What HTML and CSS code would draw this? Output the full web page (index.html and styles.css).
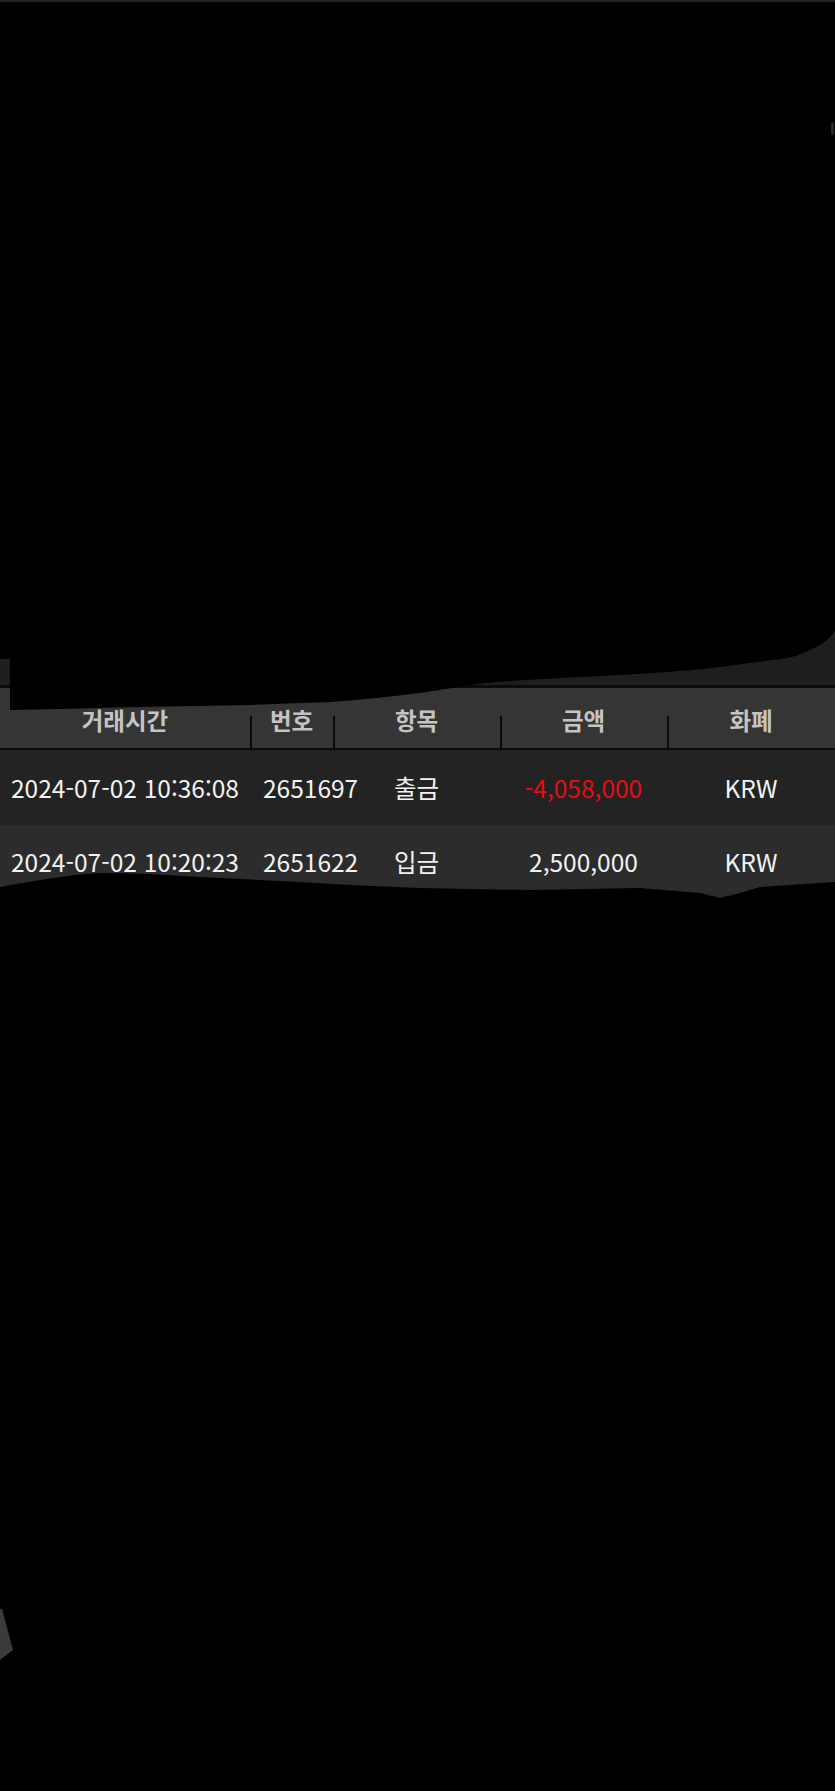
FILE: index.html
```html
<!DOCTYPE html>
<html lang="ko">
    <head>
        <meta charset="UTF-8">
        <meta name="viewport" content="width=device-width, initial-scale=1.0">
        <title>거래내역</title>
        <link rel="stylesheet" href="styles.css">
    </head>
    <body>
        <div class="page">
            <div class="topbar"></div>
            <div class="hidden-area"></div>
            <div class="band"></div>

            <div class="history">
                <div class="history-head">
                    <div class="th">거래시간</div>
                    <div class="th">번호</div>
                    <div class="th">항목</div>
                    <div class="th">금액</div>
                    <div class="th">화폐</div>
                </div>
                <div class="history-row odd">
                    <div class="td">2024-07-02 10:36:08</div>
                    <div class="td num">2651697</div>
                    <div class="td">출금</div>
                    <div class="td minus">-4,058,000</div>
                    <div class="td">KRW</div>
                </div>
                <div class="history-row even">
                    <div class="td">2024-07-02 10:20:23</div>
                    <div class="td num">2651622</div>
                    <div class="td">입금</div>
                    <div class="td">2,500,000</div>
                    <div class="td">KRW</div>
                </div>
            </div>

            <!-- 가림 처리 -->
            <svg class="mask mask-top" width="835" height="712" viewBox="0 0 835 712">
                <path d="M0 2 H835 V630 C832 636 826 642 818 646 C808 651 798 656 788 658 L750 663 L720 667 C690 671 640 674 600 676 C540 679 500 681 470 685 C440 690 400 697 330 702 L250 705 L140 707 L60 709 L10 710 V659 H0 Z" fill="#000"/>
            </svg>
            <svg class="mask mask-bottom" width="835" height="50" viewBox="0 0 835 50">
                <path d="M0 15 C20 11 40 8 60 5 C80 2 95 1 110 1 L150 2 L200 5 L280 9 L350 13 L420 16 L530 18 L640 16 L700 21 L720 26 L740 21 L760 15 L835 10 V50 H0 Z" fill="#000"/>
            </svg>
            <span class="speck"></span>
            <svg class="shard" width="16" height="60" viewBox="0 0 16 60">
                <path d="M0 3 L2 3 L13 44 L0 54 Z" fill="#3a3a3a"/>
            </svg>
        </div>
    </body>
</html>
```

FILE: styles.css
```css
body {
    margin: 0;
    background-color: #000;
    font-family: 'Noto Sans CJK KR', 'Noto Sans', sans-serif;
}
.page {
    position: relative;
    width: 835px;
    height: 1791px;
    overflow: hidden;
    background-color: #000;
}
.topbar {
    height: 2px;
    background-color: #202326;
}
.hidden-area {
    height: 616px;
}
.band {
    height: 67px;
    background-color: #1c1e1f;
    border-bottom: 3px solid #0b0b0b;
}
.history-head,
.history-row {
    display: grid;
    grid-template-columns: 250px 83px 167px 167px 168px;
}
.history-head {
    height: 60px;
    background-color: #353535;
    border-bottom: 2px solid #0e0e0e;
}
.th {
    display: flex;
    align-items: center;
    justify-content: center;
    padding-top: 4px;
    color: #c4c4c4;
    font-size: 23.5px;
    font-weight: 700;
    position: relative;
}
.th + .th::before {
    content: '';
    position: absolute;
    left: 0;
    top: 28px;
    bottom: 0;
    width: 2px;
    background-color: #0a0a0a;
}
.history-row {
    height: 75px;
    align-items: center;
}
.history-row.odd {
    background-color: #232323;
}
.history-row.even {
    height: 76px;
    padding-bottom: 3px;
    box-sizing: border-box;
    background-color: #2c2c2c;
}
.td {
    color: #f2f2f2;
    font-size: 24.5px;
    text-align: center;
    white-space: nowrap;
}
.td.num {
    text-align: left;
    padding-left: 13px;
}
.td.minus {
    color: #e60d12;
}
.mask {
    position: absolute;
    left: 0;
}
.mask-top {
    top: 0;
}
.mask-bottom {
    top: 872px;
}
.speck {
    position: absolute;
    left: 831px;
    top: 122px;
    width: 3px;
    height: 13px;
    border-radius: 2px;
    background-color: #262626;
}
.shard {
    position: absolute;
    left: 0;
    top: 1606px;
}
```
